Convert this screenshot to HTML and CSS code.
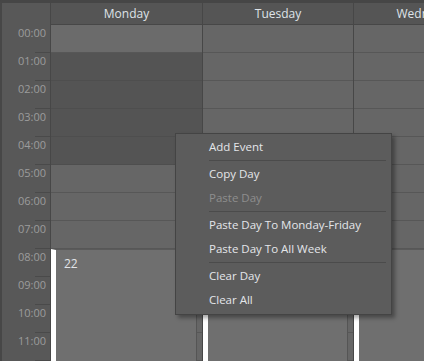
FILE: index.html
```html
<!DOCTYPE html>
<html>
<head>
    <title>Schedule</title>
    <link rel="stylesheet" href="styles.css">
</head>
<body>
    <div class="cal">
        <div class="corner"></div>
        <div class="head">Monday</div>
        <div class="head">Tuesday</div>
        <div class="head">Wednesday</div>

        <div class="times" id="times"></div>
        <div class="day" id="mon"><div class="event"><span>22</span></div></div>
        <div class="day" id="tue"><div class="event"></div></div>
        <div class="day" id="wed"><div class="event"></div></div>
    </div>

    <div class="menu">
        <div class="item">Add Event</div>
        <div class="sep"></div>
        <div class="item">Copy Day</div>
        <div class="item off">Paste Day</div>
        <div class="sep"></div>
        <div class="item">Paste Day To Monday-Friday</div>
        <div class="item">Paste Day To All Week</div>
        <div class="sep"></div>
        <div class="item">Clear Day</div>
        <div class="item">Clear All</div>
    </div>

    <script>
        // часы слева и ячейки дней
        var times = document.getElementById('times');
        for (var h = 0; h < 12; h++) {
            var t = document.createElement('div');
            t.className = 'time';
            t.textContent = (h < 10 ? '0' + h : h) + ':00';
            times.appendChild(t);
        }
        var dark = [1, 2, 3, 4];
        ['mon', 'tue', 'wed'].forEach(function (id) {
            var col = document.getElementById(id);
            for (var h = 0; h < 12; h++) {
                var c = document.createElement('div');
                c.className = 'cell' + (id === 'mon' && dark.indexOf(h) >= 0 ? ' busy' : '');
                if (id === 'mon' && h === 0) c.className += ' first';
                col.insertBefore(c, col.lastElementChild);
            }
        });
    </script>
</body>
</html>
```

FILE: styles.css
```css
body { margin: 0; background: #4a4a4a; overflow: hidden; font-family: "Open Sans", "Noto Sans", sans-serif; }
.cal { display: grid; grid-template-columns: 49px 152px 151px 151px; grid-template-rows: 22px auto; border-top: 3px solid #464646; border-left: 2px solid #474747; height: 358px; }
.corner { background: #585858; border-right: 1px solid #474747; }
.head { background: #555; border-right: 1px solid #474747; border-bottom: 1px solid #474747; color: #dfe3e8; font-size: 12px; text-align: center; line-height: 21px; white-space: nowrap; overflow: hidden; }
.times { background: #585858; border-right: 1px solid #474747; }
.time { position: relative; height: 28px; box-sizing: border-box; padding: 1px 4px 0 0; text-align: right; font-size: 11px; line-height: 13px; color: #9c9c9c; }
.time::after { content: ""; position: absolute; left: 33px; right: 0; bottom: 0; height: 1px; background: #4a4a4a; }
.day { position: relative; border-right: 1px solid #474747; background: #5e5e5e; }
.cell { height: 28px; box-sizing: border-box; background: #666; border-bottom: 1px solid #575757; }
.cell.first { background: #6b6b6b; }
.cell.busy { background: #545454; border-bottom-color: #4e4e4e; }
.event { position: absolute; left: 0; right: 5px; top: 224px; bottom: 0; border-left: 5px solid #fff; background: #6f6f6f; border-top: 1px solid #5a5a5a; border-right: 1px solid #555; color: #e2e4e8; font-size: 12px; }
.event span { display: block; padding: 5px 0 0 8px; }
.menu { position: absolute; left: 175px; top: 133px; width: 215px; padding: 1px 0 2px 0; background: #5c5c5c; border: 1px solid #444; box-shadow: 3px 3px 4px rgba(0, 0, 0, 0.35); }
.item { height: 24px; line-height: 24px; padding-left: 33px; color: #e4e6ea; font-size: 11.5px; }
.item.off { color: #8e8e8e; }
.sep { height: 1px; background: #4b4b4b; margin: 1px 5px 1px 33px; }
```
